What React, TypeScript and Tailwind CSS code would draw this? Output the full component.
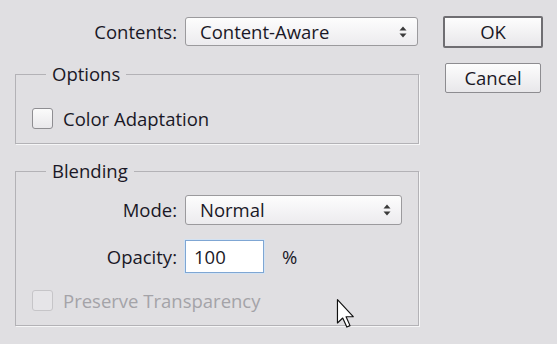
import * as React from "react";

function UpDown() {
  return (
    <svg width="8" height="12" viewBox="0 0 8 12" className="shrink-0">
      <path d="M4 0.5 L7.5 4.5 L0.5 4.5 Z" fill="#3a3a3a" />
      <path d="M4 11.5 L7.5 7.5 L0.5 7.5 Z" fill="#3a3a3a" />
    </svg>
  );
}

function Select(props: { value: string; className?: string }) {
  return (
    <div
      className={
        "flex h-full items-center justify-between rounded-[3px] border border-[#9b9a9d] bg-gradient-to-b from-[#fdfdfd] to-[#ecebee] pl-[14px] pr-[10px] " +
        (props.className ?? "")
      }
    >
      <span>{props.value}</span>
      <UpDown />
    </div>
  );
}

function Checkbox(props: { disabled?: boolean }) {
  return (
    <span
      className={
        props.disabled
          ? "block h-[21px] w-[21px] shrink-0 rounded-[3px] border border-[#c6c5c8] bg-[#e6e5e8]"
          : "block h-[21px] w-[21px] shrink-0 rounded-[3px] border border-[#8f8e92] bg-gradient-to-b from-[#fbfbfb] to-[#e9e8eb]"
      }
    />
  );
}

function Cursor() {
  return (
    <svg
      width="19"
      height="31"
      viewBox="0 0 13 21"
      className="absolute left-[336px] top-[298px]"
    >
      <path
        d="M1 1 L1 17 L4.6 13.6 L7.4 19.8 L9.6 18.8 L6.9 12.7 L11.8 12.7 Z"
        fill="#ffffff"
        stroke="#111111"
        strokeWidth="0.8"
        strokeLinejoin="round"
      />
    </svg>
  );
}

export default function App() {
  return (
    <div className="relative flex h-[344px] w-[557px] overflow-hidden bg-[#e0dfe2] font-['Open_Sans',sans-serif] text-[18.5px] leading-[22px] text-[#1a1826]">
      <div className="w-[419px] pl-[15px] pt-[17px]">
        <div className="flex h-[29px] items-center">
          <span className="w-[162px] text-right">Contents:</span>
          <Select value="Content-Aware" className="ml-[8px] w-[233px]" />
        </div>

        <fieldset className="mt-[17px] w-[404px] border border-[#b3b2b6] pb-[14px] shadow-[1px_1px_0_#f6f6f7]">
          <legend className="ml-[30px] px-[6px]">Options</legend>
          <label className="mt-[23px] flex h-[21px] items-center pl-[16px]">
            <Checkbox />
            <span className="ml-[10px]">Color Adaptation</span>
          </label>
        </fieldset>

        <fieldset className="mt-[16px] w-[404px] border border-[#b3b2b6] pb-[14px] shadow-[1px_1px_0_#f6f6f7]">
          <legend className="ml-[30px] px-[6px]">Blending</legend>
          <div className="mt-[13px] flex h-[30px] items-center">
            <span className="w-[161px] text-right">Mode:</span>
            <Select value="Normal" className="ml-[8px] w-[217px]" />
          </div>
          <div className="mt-[15px] flex h-[33px] items-center">
            <span className="w-[161px] text-right">Opacity:</span>
            <div className="ml-[8px] flex h-full w-[79px] items-center border border-[#7fa6d3] bg-white pl-[8px] shadow-[0_0_0_1px_#d3e2f2]">
              100
            </div>
            <span className="ml-[18px]">%</span>
          </div>
          <label className="mt-[17px] flex h-[21px] items-center pl-[16px] text-[#a4a3a8]">
            <Checkbox disabled />
            <span className="ml-[10px]">Preserve Transparency</span>
          </label>
        </fieldset>
      </div>

      <div className="flex flex-col items-start pl-[24px] pt-[16px]">
        <button className="h-[32px] w-[100px] rounded-[2px] border-2 border-[#6f6e72] bg-gradient-to-b from-[#fdfdfd] to-[#e8e7ea]">
          OK
        </button>
        <button className="ml-[2px] mt-[15px] h-[30px] w-[96px] rounded-[2px] border border-[#8d8c90] bg-gradient-to-b from-[#fdfdfd] to-[#e8e7ea]">
          Cancel
        </button>
      </div>

      <Cursor />
    </div>
  );
}
